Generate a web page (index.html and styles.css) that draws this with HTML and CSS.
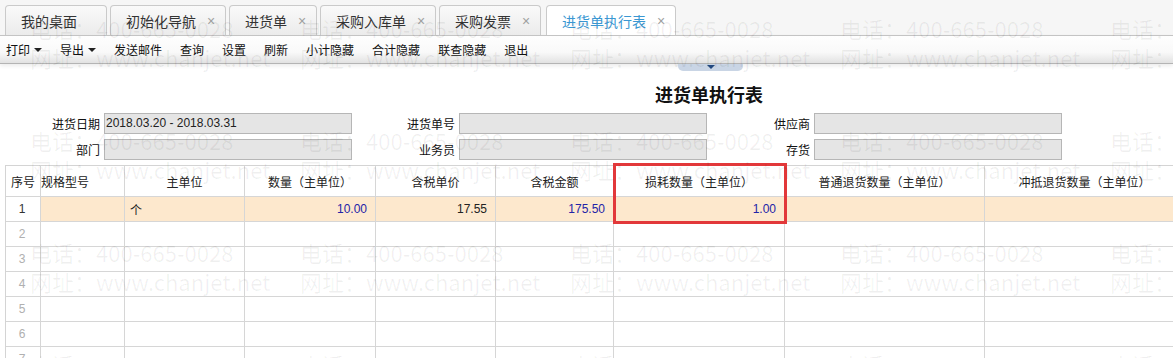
FILE: index.html
```html
<!DOCTYPE html>
<html lang="zh-CN">
<head>
    <meta charset="UTF-8">
    <title>进货单执行表</title>
    <link rel="stylesheet" href="styles.css">
</head>
<body>
    <div class="page">
        <!-- tabs -->
        <div class="tabbar">
            <div class="tab"><span>我的桌面</span><span class="close hidden">×</span></div>
            <div class="tab"><span>初始化导航</span><span class="close">×</span></div>
            <div class="tab"><span>进货单</span><span class="close">×</span></div>
            <div class="tab"><span>采购入库单</span><span class="close">×</span></div>
            <div class="tab"><span>采购发票</span><span class="close">×</span></div>
            <div class="tab active"><span>进货单执行表</span><span class="close">×</span></div>
        </div>

        <!-- toolbar -->
        <div class="toolbar">
            <span class="tool">打印<i class="caret"></i></span>
            <span class="tool">导出<i class="caret"></i></span>
            <span class="tool">发送邮件</span>
            <span class="tool">查询</span>
            <span class="tool">设置</span>
            <span class="tool">刷新</span>
            <span class="tool">小计隐藏</span>
            <span class="tool">合计隐藏</span>
            <span class="tool">联查隐藏</span>
            <span class="tool">退出</span>
        </div>
        <div class="handle"><i></i></div>

        <h1 class="title">进货单执行表</h1>

        <div class="filters">
            <div class="frow">
                <label class="field"><span class="flabel">进货日期</span><span class="finput">2018.03.20 - 2018.03.31</span></label>
                <label class="field"><span class="flabel">进货单号</span><span class="finput"></span></label>
                <label class="field"><span class="flabel">供应商</span><span class="finput"></span></label>
            </div>
            <div class="frow">
                <label class="field"><span class="flabel">部门</span><span class="finput"></span></label>
                <label class="field"><span class="flabel">业务员</span><span class="finput"></span></label>
                <label class="field"><span class="flabel">存货</span><span class="finput"></span></label>
            </div>
        </div>

        <div class="grid">
            <div class="row head">
                <div class="cell">序号</div>
                <div class="cell left">规格型号</div>
                <div class="cell">主单位</div>
                <div class="cell">数量（主单位）</div>
                <div class="cell">含税单价</div>
                <div class="cell">含税金额</div>
                <div class="cell">损耗数量（主单位）</div>
                <div class="cell">普通退货数量（主单位）</div>
                <div class="cell">冲抵退货数量（主单位）</div>
            </div>
            <div class="row current">
                <div class="cell no first">1</div>
                <div class="cell"></div>
                <div class="cell text">个</div>
                <div class="cell num blue">10.00</div>
                <div class="cell num">17.55</div>
                <div class="cell num blue">175.50</div>
                <div class="cell num blue">1.00</div>
                <div class="cell"></div>
                <div class="cell"></div>
            </div>
            <div class="row"><div class="cell no">2</div><div class="cell"></div><div class="cell"></div><div class="cell"></div><div class="cell"></div><div class="cell"></div><div class="cell"></div><div class="cell"></div><div class="cell"></div></div>
            <div class="row"><div class="cell no">3</div><div class="cell"></div><div class="cell"></div><div class="cell"></div><div class="cell"></div><div class="cell"></div><div class="cell"></div><div class="cell"></div><div class="cell"></div></div>
            <div class="row"><div class="cell no">4</div><div class="cell"></div><div class="cell"></div><div class="cell"></div><div class="cell"></div><div class="cell"></div><div class="cell"></div><div class="cell"></div><div class="cell"></div></div>
            <div class="row"><div class="cell no">5</div><div class="cell"></div><div class="cell"></div><div class="cell"></div><div class="cell"></div><div class="cell"></div><div class="cell"></div><div class="cell"></div><div class="cell"></div></div>
            <div class="row"><div class="cell no">6</div><div class="cell"></div><div class="cell"></div><div class="cell"></div><div class="cell"></div><div class="cell"></div><div class="cell"></div><div class="cell"></div><div class="cell"></div></div>
            <div class="row"><div class="cell no">7</div><div class="cell"></div><div class="cell"></div><div class="cell"></div><div class="cell"></div><div class="cell"></div><div class="cell"></div><div class="cell"></div><div class="cell"></div></div>
        </div>

        <!-- annotation -->
        <div class="highlight"></div>

        <!-- watermark -->
        <div class="watermark">
            <div class="wm-row">
                <div class="wm"><p>电话：400-665-0028</p><p>网址：www.chanjet.net</p></div>
                <div class="wm"><p>电话：400-665-0028</p><p>网址：www.chanjet.net</p></div>
                <div class="wm"><p>电话：400-665-0028</p><p>网址：www.chanjet.net</p></div>
                <div class="wm"><p>电话：400-665-0028</p><p>网址：www.chanjet.net</p></div>
                <div class="wm"><p>电话：400-665-0028</p><p>网址：www.chanjet.net</p></div>
            </div>
            <div class="wm-row">
                <div class="wm"><p>电话：400-665-0028</p><p>网址：www.chanjet.net</p></div>
                <div class="wm"><p>电话：400-665-0028</p><p>网址：www.chanjet.net</p></div>
                <div class="wm"><p>电话：400-665-0028</p><p>网址：www.chanjet.net</p></div>
                <div class="wm"><p>电话：400-665-0028</p><p>网址：www.chanjet.net</p></div>
                <div class="wm"><p>电话：400-665-0028</p><p>网址：www.chanjet.net</p></div>
            </div>
            <div class="wm-row">
                <div class="wm"><p>电话：400-665-0028</p><p>网址：www.chanjet.net</p></div>
                <div class="wm"><p>电话：400-665-0028</p><p>网址：www.chanjet.net</p></div>
                <div class="wm"><p>电话：400-665-0028</p><p>网址：www.chanjet.net</p></div>
                <div class="wm"><p>电话：400-665-0028</p><p>网址：www.chanjet.net</p></div>
                <div class="wm"><p>电话：400-665-0028</p><p>网址：www.chanjet.net</p></div>
            </div>
            <div class="wm-row">
                <div class="wm"><p>电话：400-665-0028</p><p>网址：www.chanjet.net</p></div>
                <div class="wm"><p>电话：400-665-0028</p><p>网址：www.chanjet.net</p></div>
                <div class="wm"><p>电话：400-665-0028</p><p>网址：www.chanjet.net</p></div>
                <div class="wm"><p>电话：400-665-0028</p><p>网址：www.chanjet.net</p></div>
                <div class="wm"><p>电话：400-665-0028</p><p>网址：www.chanjet.net</p></div>
            </div>
        </div>
    </div>
</body>
</html>
```

FILE: styles.css
```css
/* page */
body {
    margin: 0;
    padding: 0;
    background-color: #fff;
    font-family: "Noto Sans CJK SC", "Liberation Sans", sans-serif;
    font-size: 12px;
    color: #222;
}

.page {
    position: relative;
    width: 1173px;
    height: 358px;
    overflow: hidden;
}

/* tabs */
.tabbar {
    display: flex;
    align-items: flex-end;
    gap: 3px;
    height: 35px;
    padding-left: 5px;
    background-color: #f6f6f6;
}

.tab {
    display: flex;
    align-items: center;
    height: 29px;
    padding: 0 9px 0 15px;
    border: 1px solid #cacaca;
    border-bottom: none;
    border-radius: 4px 4px 0 0;
    background: linear-gradient(#fafafa, #ebebeb);
    font-size: 14px;
    color: #333;
}

.tab.active {
    margin-left: 2px;
    background: #fff;
    color: #3a97d2;
}

.close {
    width: 9px;
    margin-left: 11px;
    overflow: hidden;
    color: #a0a0a0;
    font-family: "Liberation Sans", sans-serif;
    font-size: 14px;
}

.close.hidden {
    visibility: hidden;
}

/* toolbar */
.toolbar {
    display: flex;
    align-items: center;
    gap: 18px;
    height: 27px;
    padding-left: 6px;
    border-top: 1px solid #c4c4c4;
    border-bottom: 1px solid #b4b4b4;
    background: linear-gradient(#fefefe 0, #f9f9f9 60%, #e2e2e2 100%);
    box-shadow: 0 2px 4px rgba(0, 0, 0, 0.08);
}

.tool {
    display: flex;
    align-items: center;
    color: #111;
}

.caret {
    width: 0;
    height: 0;
    margin-left: 4px;
    border-left: 4px solid transparent;
    border-right: 4px solid transparent;
    border-top: 4px solid #222;
}

.handle {
    position: absolute;
    left: 678px;
    top: 64px;
    width: 65px;
    height: 7px;
    border-radius: 0 0 5px 5px;
    background-color: #c9d5e5;
    display: flex;
    justify-content: center;
}

.handle i {
    width: 0;
    height: 0;
    margin-top: 1px;
    border-left: 4px solid transparent;
    border-right: 4px solid transparent;
    border-top: 4px solid #24497f;
}

/* title */
.title {
    margin: 18px 0 0 0;
    padding-left: 655px;
    height: 24px;
    line-height: 24px;
    font-size: 18px;
    font-weight: bold;
    color: #111;
}

/* filter form */
.filters {
    display: flex;
    flex-direction: column;
    gap: 5px;
    margin-top: 7px;
}

.frow {
    display: flex;
    gap: 3px;
}

.field {
    display: flex;
    align-items: center;
    gap: 4px;
}

.flabel {
    width: 100px;
    text-align: right;
    color: #111;
}

.finput {
    box-sizing: border-box;
    width: 248px;
    height: 21px;
    line-height: 19px;
    padding-left: 1px;
    border: 1px solid #b6b6b6;
    background-color: #e5e5e5;
    font-family: "Liberation Sans", sans-serif;
    font-size: 12px;
    color: #222;
}

/* grid */
.grid {
    margin: 5px 0 0 5px;
    border-top: 1px solid #d4d4d4;
    border-left: 1px solid #d4d4d4;
    width: 1400px;
}

.row {
    display: grid;
    grid-template-columns: 35px 84px 120px 131px 120px 118px 171px 200px 200px;
    height: 25px;
}

.row.head {
    height: 31px;
}

.cell {
    box-sizing: border-box;
    display: flex;
    align-items: center;
    justify-content: center;
    border-right: 1px solid #d6d6d6;
    border-bottom: 1px solid #d6d6d6;
    white-space: nowrap;
    overflow: hidden;
}

.cell.left {
    justify-content: flex-start;
}

.head .cell {
    color: #222;
}

.row.current .cell {
    background-color: #fde8cd;
}

.row.current .cell.first {
    background-color: #fff;
    color: #333;
}

.cell.no {
    font-family: "Liberation Sans", sans-serif;
    color: #b0b0b0;
    padding-right: 2px;
}

.cell.text {
    justify-content: flex-start;
    padding-left: 5px;
}

.cell.num {
    justify-content: flex-end;
    padding-right: 8px;
    font-family: "Liberation Sans", sans-serif;
    color: #222;
}

.cell.num.blue {
    color: #2323a8;
}

/* red annotation box */
.highlight {
    position: absolute;
    left: 613px;
    top: 163px;
    width: 174px;
    height: 61px;
    box-sizing: border-box;
    border: 3px solid #e2383a;
}

/* watermark */
.watermark {
    position: absolute;
    left: 30px;
    top: 14px;
    pointer-events: none;
}

.wm-row {
    display: flex;
    height: 112px;
}

.wm {
    width: 270px;
}

.wm p {
    margin: 0;
    height: 29px;
    line-height: 29px;
    font-size: 22px;
    color: rgba(0, 0, 0, 0.06);
    white-space: nowrap;
}
```
